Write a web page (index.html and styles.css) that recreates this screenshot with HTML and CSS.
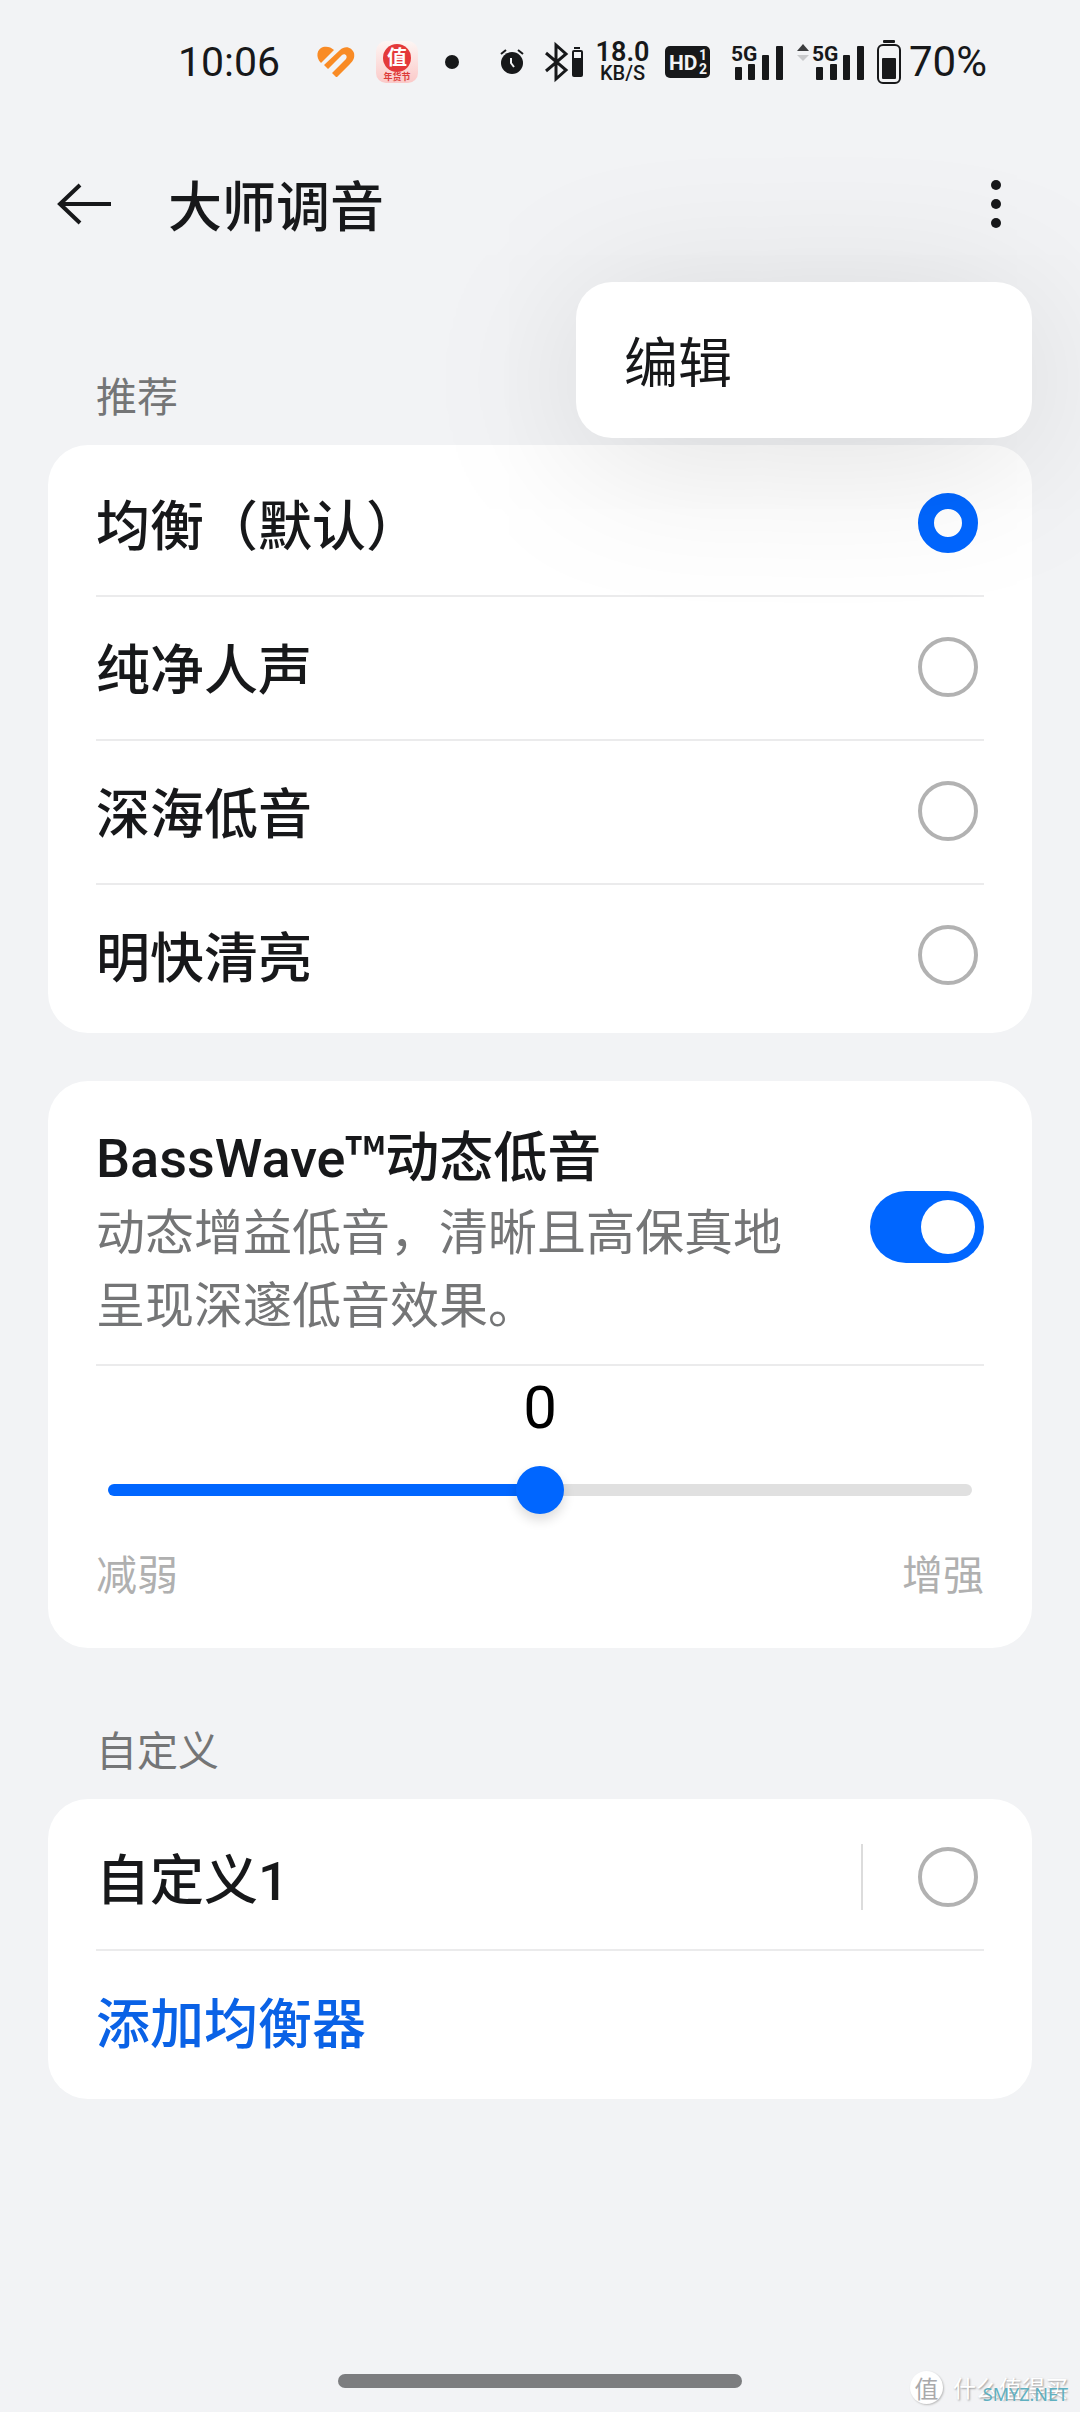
FILE: index.html
```html
<!DOCTYPE html>
<html lang="zh-CN">
<head>
<meta charset="utf-8">
<meta name="viewport" content="width=device-width, initial-scale=1">
<title>大师调音</title>
<link rel="stylesheet" href="styles.css">
</head>
<body>
<div class="screen">
  <div class="status">
    <div class="status-left">
      <span class="clock">10:06</span>
      <svg class="icon" width="40" height="34" viewBox="0 0 40 34">
        <path d="M20 32 L16 28 L30 14 C32 11 29 8 26 10 L12 24 L8 20 L24 5 C29 0 36 2 38 8 C39 13 37 16 34 19 L21 32Z" fill="#f98b25"/>
        <path d="M5 18 C-1 12 1 4 7 2 C11 1 15 2 18 5 Z" fill="#f98b25"/>
      </svg>
      <svg class="icon" width="42" height="42" viewBox="0 0 42 42">
        <defs><linearGradient id="badge" x1="0" y1="0" x2="0" y2="1"><stop offset="0" stop-color="#fdf6f4"/><stop offset="1" stop-color="#fbc9c8"/></linearGradient></defs>
        <rect width="42" height="42" rx="10" fill="url(#badge)"/>
        <circle cx="21" cy="17" r="14" fill="#e4393a"/>
        <text class="badge-char" x="21" y="24" text-anchor="middle">值</text>
        <text class="badge-note" x="21" y="39" text-anchor="middle">年货节</text>
      </svg>
      <svg class="icon" width="26" height="26" viewBox="0 0 26 26"><circle cx="14" cy="13" r="7" fill="#17181a"/></svg>
    </div>
    <div class="status-right">
      <svg class="icon" width="34" height="28" viewBox="0 0 34 28">
        <circle cx="13" cy="15" r="11" fill="#17181a"/>
        <path d="M2 6 L7 2 M24 6 L19 2" stroke="#17181a" stroke-width="2"/>
        <path d="M12 10 V15 L15 19" fill="none" stroke="#f2f3f5" stroke-width="2"/>
      </svg>
      <svg class="icon" width="39" height="38" viewBox="0 0 39 38">
        <path d="M1 10 L21 27 L11 36 V2 L21 11 L1 28" fill="none" stroke="#17181a" stroke-width="3"/>
        <rect x="29" y="4" width="6" height="2" fill="#17181a"/>
        <rect x="27" y="7" width="11" height="27" rx="2" fill="#17181a"/>
        <rect x="29" y="9" width="7" height="6" fill="#f2f3f5"/>
      </svg>
      <div class="speed"><span class="speed-value">18.0</span><span class="speed-unit">KB/S</span></div>
      <svg class="icon" width="58" height="32" viewBox="0 0 58 32">
        <rect x="4" width="45" height="32" rx="5" fill="#17181a"/>
        <text class="hd" x="8" y="24">HD</text>
        <text class="hd-sim" x="38" y="14">1</text>
        <text class="hd-sim" x="38" y="28">2</text>
      </svg>
      <svg class="icon" width="52" height="38" viewBox="0 0 52 38">
        <text class="net" x="0" y="18">5G</text>
        <g fill="#17181a"><rect x="4" y="24" width="7" height="13" rx="1"/><rect x="17" y="21" width="7" height="16" rx="1"/><rect x="31" y="12" width="7" height="25" rx="1"/><rect x="45" y="3" width="7" height="34" rx="1"/></g>
      </svg>
      <svg class="icon" width="70" height="38" viewBox="0 0 70 38">
        <path d="M2 8 L8 1 L14 8Z" fill="#3c3d3f"/><path d="M2 12 H14 L8 18Z" fill="#c8c9cb"/>
        <text class="net" x="17" y="18">5G</text>
        <g fill="#17181a"><rect x="21" y="24" width="7" height="13" rx="1"/><rect x="35" y="21" width="7" height="16" rx="1"/><rect x="48" y="12" width="7" height="25" rx="1"/><rect x="62" y="3" width="7" height="34" rx="1"/></g>
      </svg>
      <div class="battery">
        <svg class="icon" width="24" height="46" viewBox="0 0 24 46">
          <rect x="6" y="1" width="12" height="3" rx="1" fill="#17181a"/>
          <rect x="1" y="6" width="22" height="38" rx="5" fill="none" stroke="#17181a" stroke-width="2"/>
          <rect x="5" y="19" width="14" height="21" rx="1" fill="#17181a"/>
        </svg>
        <span class="charge">70%</span>
      </div>
    </div>
  </div>

  <header class="bar">
    <button class="icon-button" type="button" aria-label="返回">
      <svg class="icon" width="56" height="44" viewBox="0 0 56 44"><path d="M55 22 H5 M24 3 L4 22 L24 41" fill="none" stroke="#17181a" stroke-width="4"/></svg>
    </button>
    <h1 class="title">大师调音</h1>
    <button class="icon-button" type="button" aria-label="更多">
      <svg class="icon" width="24" height="52" viewBox="0 0 24 52" fill="#17181a"><circle cx="12" cy="7" r="5"/><circle cx="12" cy="26" r="5"/><circle cx="12" cy="45" r="5"/></svg>
    </button>
    <div class="menu"><button class="menu-item" type="button">编辑</button></div>
  </header>

  <main class="content">
    <h2 class="section-label">推荐</h2>
    <section class="card list">
      <label class="row"><span class="name">均衡（默认）</span><input class="radio" type="radio" name="eq" checked></label>
      <label class="row"><span class="name">纯净人声</span><input class="radio" type="radio" name="eq"></label>
      <label class="row"><span class="name">深海低音</span><input class="radio" type="radio" name="eq"></label>
      <label class="row"><span class="name">明快清亮</span><input class="radio" type="radio" name="eq"></label>
    </section>

    <section class="card bass">
      <label class="bass-head">
        <span class="bass-text">
          <span class="bass-title"><span class="latin">BassWave</span>™动态低音</span>
          <span class="bass-desc">动态增益低音，清晰且高保真地呈现深邃低音效果。</span>
        </span>
        <input class="switch" type="checkbox" role="switch" checked>
      </label>
      <div class="bass-level">
        <output class="level" for="level">0</output>
        <input class="slider" id="level" type="range" min="-5" max="5" value="0" aria-label="动态低音">
        <div class="ends"><span>减弱</span><span>增强</span></div>
      </div>
    </section>

    <h2 class="section-label custom-label">自定义</h2>
    <section class="card list">
      <label class="row"><span class="name">自定义<span class="latin">1</span></span><span class="split"></span><input class="radio" type="radio" name="eq"></label>
      <div class="row"><button class="add" type="button">添加均衡器</button></div>
    </section>
  </main>

  <footer class="foot">
    <div class="home"></div>
    <div class="mark"><span class="mark-logo">值</span><span class="mark-text">什么值得买</span><span class="mark-site">SMYZ.NET</span></div>
  </footer>
</div>
</body>
</html>
```
FILE: styles.css
```css
* { box-sizing: border-box; }

body {
  margin: 0;
  background: #f2f3f5;
  color: #17181a;
  font-family: "Noto Sans CJK SC", Roboto, sans-serif;
}

button {
  margin: 0;
  padding: 0;
  border: 0;
  background: none;
  color: inherit;
  font: inherit;
}

h1, h2 { margin: 0; }

.icon { display: block; flex: none; overflow: visible; }
.latin { font-family: Roboto, sans-serif; line-height: 1; }

.screen {
  display: flex;
  flex-direction: column;
  min-height: 100vh;
}

/* Status bar */
.status {
  display: flex;
  align-items: center;
  justify-content: space-between;
  height: 124px;
  padding: 0 93px 0 178px;
  font-family: Roboto, "Noto Sans CJK SC", sans-serif;
}

.status-left { display: flex; align-items: center; gap: 20px; }
.status-right { display: flex; align-items: center; gap: 12px; }
.battery { display: flex; align-items: center; gap: 8px; }
.clock { margin-right: 16px; font-size: 41px; line-height: 52px; }
.charge { font-size: 42px; line-height: 52px; }

.speed {
  display: flex;
  flex-direction: column;
  align-items: center;
  width: 53px;
  font-weight: 500;
}

.speed-value { font-size: 27px; line-height: 22px; font-weight: 600; }
.speed-unit { font-size: 20px; line-height: 20px; }
.badge-char { fill: #fff; font-size: 20px; font-weight: 700; }
.badge-note { fill: #dc3b38; font-size: 9px; font-weight: 700; }
.hd { fill: #f2f3f5; font-size: 21px; font-weight: 700; }
.hd-sim { fill: #f2f3f5; font-size: 14px; font-weight: 700; }
.net { fill: #17181a; font-size: 21px; font-weight: 700; }

/* Title bar */
.bar {
  position: relative;
  display: flex;
  align-items: center;
  height: 160px;
  padding: 0 72px 0 56px;
}

.title {
  flex: 1;
  padding-left: 56px;
  font-size: 54px;
  font-weight: 500;
  line-height: 80px;
}

.menu {
  position: absolute;
  top: 158px;
  right: 48px;
  width: 456px;
  border-radius: 36px;
  background: #fff;
  box-shadow: 0 20px 160px rgba(0, 0, 0, 0.13);
}

.menu-item {
  display: block;
  width: 100%;
  padding: 38px 48px;
  font-size: 54px;
  line-height: 80px;
  text-align: left;
}

/* Content */
.content { padding: 80px 48px 0; }

.section-label {
  padding: 0 48px 21px;
  color: #747576;
  font-size: 41px;
  font-weight: 400;
  line-height: 60px;
}

.card { border-radius: 40px; background: #fff; }
.list { padding: 6px 48px; }

.row {
  display: flex;
  align-items: center;
  height: 144px;
  padding-right: 6px;
}

.row + .row { box-shadow: inset 0 2px 0 #ebebec; }

.name, .add {
  flex: 1;
  font-size: 54px;
  font-weight: 500;
  line-height: 80px;
  text-align: left;
}

.add { color: #0a62e6; }

.split {
  width: 2px;
  height: 66px;
  margin-right: 55px;
  background: #dcdcdc;
}

.radio {
  appearance: none;
  width: 60px;
  height: 60px;
  margin: 0;
  border: 4px solid #b2b2b2;
  border-radius: 50%;
}

.radio:checked { border: 16px solid #0066ff; }

.bass { margin-top: 48px; padding: 34px 48px 52px; }

.bass-head {
  display: flex;
  align-items: center;
  justify-content: space-between;
  padding-bottom: 26px;
  border-bottom: 2px solid #ebebec;
}

.bass-text { display: flex; flex-direction: column; width: 700px; }
.bass-title { font-size: 54px; font-weight: 500; line-height: 77px; }
.bass-desc { color: #747576; font-size: 49px; line-height: 73px; }

.switch {
  appearance: none;
  display: flex;
  align-items: center;
  justify-content: flex-end;
  width: 114px;
  height: 72px;
  margin: 0;
  padding: 9px;
  border-radius: 36px;
  background: #0066ff;
}

.switch::before {
  content: "";
  width: 54px;
  height: 54px;
  border-radius: 50%;
  background: #fff;
}

.bass-level { display: flex; flex-direction: column; }

.level {
  padding-top: 2px;
  color: #000;
  font-family: Roboto, sans-serif;
  font-size: 60px;
  line-height: 80px;
  text-align: center;
}

.slider {
  appearance: none;
  height: 48px;
  margin: 18px 12px 34px;
  background: none;
}

.slider::-webkit-slider-runnable-track {
  height: 12px;
  border-radius: 6px;
  background: linear-gradient(90deg, #0066ff 50%, #e0e0e0 50%);
}

.slider::-webkit-slider-thumb {
  appearance: none;
  width: 48px;
  height: 48px;
  margin-top: -18px;
  border-radius: 50%;
  background: #0066ff;
  box-shadow: 0 6px 12px rgba(0, 0, 0, 0.14);
}

.ends {
  display: flex;
  justify-content: space-between;
  color: #b0b0b0;
  font-size: 41px;
  line-height: 48px;
}

.custom-label { padding-top: 70px; }

/* Bottom edge */
.foot {
  position: relative;
  display: flex;
  justify-content: center;
  margin-top: auto;
  padding-bottom: 24px;
}

.home { width: 404px; height: 14px; border-radius: 7px; background: #7c7d7f; }

.mark {
  position: absolute;
  right: 12px;
  bottom: 8px;
  display: flex;
  align-items: center;
  gap: 10px;
  color: #fff;
}

.mark-logo {
  width: 33px;
  height: 33px;
  border-radius: 50%;
  background: #fff;
  box-shadow: 1px 1px 2px #bbb;
  color: #a9a9ab;
  font-size: 24px;
  line-height: 33px;
  text-align: center;
}

.mark-text { font-size: 23px; line-height: 33px; text-shadow: 1px 1px 2px #999; }

.mark-site {
  position: absolute;
  right: 0;
  bottom: 0;
  color: #5fb0c0;
  font: 18px/20px "Noto Sans", sans-serif;
}
```
